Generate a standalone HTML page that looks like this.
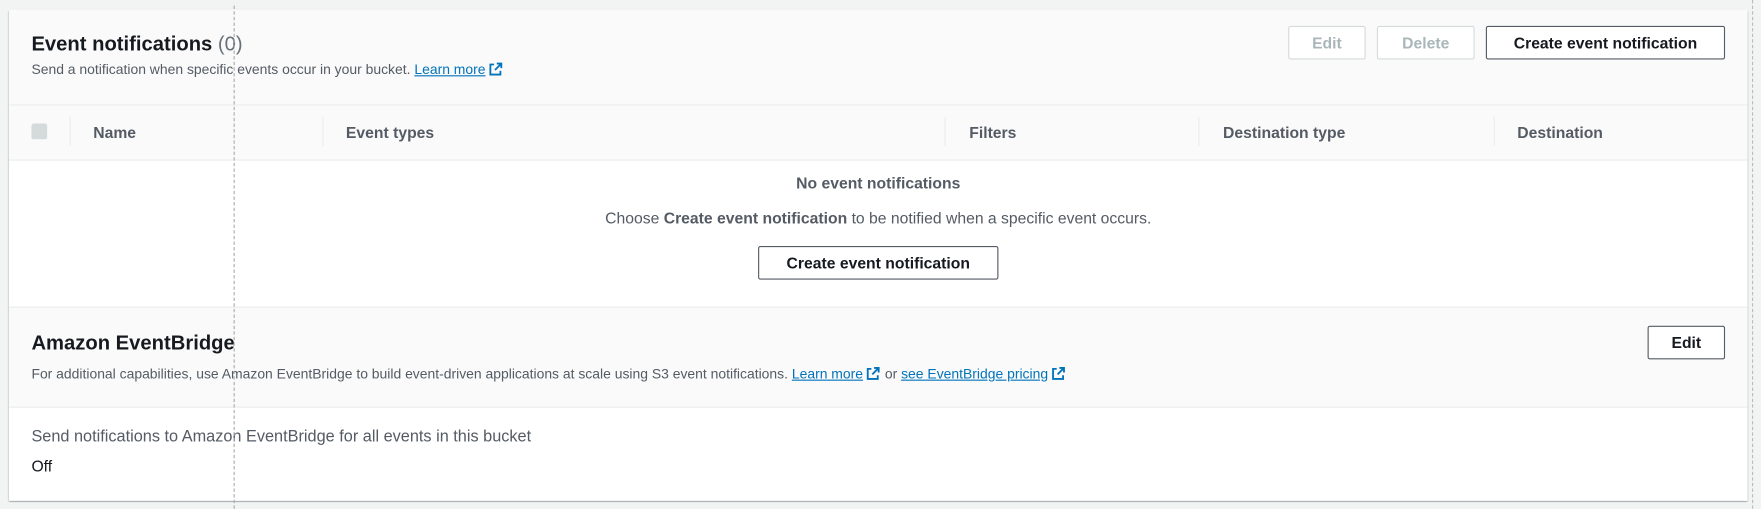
<!DOCTYPE html>
<html><head><style>
*{box-sizing:border-box;margin:0;padding:0}
html,body{width:1761px;height:509px;overflow:hidden;background:#f2f3f3}
#w{position:absolute;left:0;top:0;width:1568px;height:453px;transform:scale(1.12309);transform-origin:0 0;font-family:"Liberation Sans",sans-serif;color:#16191f}
.abs{position:absolute;white-space:nowrap}
.card{position:absolute;left:8px;top:9px;width:1548px;height:437px;background:#fff;box-shadow:0 1px 1px rgba(0,28,36,.3),1px 1px 1px rgba(0,28,36,.15),-1px 1px 1px rgba(0,28,36,.15)}
.btn{position:absolute;height:30px;border:1px solid #545b64;border-radius:2px;background:#fff;font-weight:bold;font-size:14px;color:#545b64;text-align:center;line-height:28px}
.dis{border-color:#d5dbdb;color:#aab7b8}
a{color:#0073bb;text-decoration:underline}
.th{position:absolute;top:101px;font-size:14px;font-weight:bold;color:#545b64}
.sep{position:absolute;top:95px;width:1px;height:26px;background:#eaeded}
.ext{display:inline-block;width:13px;height:13px;vertical-align:-2px;margin-left:3px}
</style></head><body><div id="w">
<div class="card">
 <div class="abs" style="left:0;top:0;width:1548px;height:85px;background:#fafafa;border-bottom:1px solid #eaeded"></div>
 <div class="abs" style="left:0;top:85px;width:1548px;height:49px;background:#fafafa;border-bottom:1px solid #eaeded"></div>
 <div class="abs" style="left:20px;top:20px;font-size:18px;font-weight:bold">Event notifications <span style="font-weight:normal;color:#687078">(0)</span></div>
 <div class="abs" style="left:20px;top:46px;font-size:12.4px;color:#545b64">Send a notification when specific events occur in your bucket. <a>Learn more</a><svg class="ext" viewBox="0 0 16 16"><path d="M9 2h5v5M14 2L7 9M6 3H2v11h11v-4" fill="none" stroke="#0073bb" stroke-width="2"/></svg></div>
 <div class="btn dis" style="left:1139px;top:14px;width:69px">Edit</div>
 <div class="btn dis" style="left:1218px;top:14px;width:87px">Delete</div>
 <div class="btn" style="left:1315px;top:14px;width:213px;color:#16191f">Create event notification</div>
 <div class="abs" style="left:20px;top:101px;width:14px;height:14px;background:#d5dbdb;border-radius:2px"></div>
 <div class="sep" style="left:54px"></div><div class="sep" style="left:279px"></div><div class="sep" style="left:833px"></div><div class="sep" style="left:1059px"></div><div class="sep" style="left:1322px"></div>
 <div class="th" style="left:75px">Name</div>
 <div class="th" style="left:300px">Event types</div>
 <div class="th" style="left:855px">Filters</div>
 <div class="th" style="left:1081px">Destination type</div>
 <div class="th" style="left:1343px">Destination</div>
 <div class="abs" style="left:0;width:1548px;top:146px;text-align:center;font-size:14px;font-weight:bold;color:#545b64">No event notifications</div>
 <div class="abs" style="left:0;width:1548px;top:177px;text-align:center;font-size:14px;color:#545b64">Choose <b>Create event notification</b> to be notified when a specific event occurs.</div>
 <div class="btn" style="left:667px;top:210px;width:214px;color:#16191f">Create event notification</div>
 <div class="abs" style="left:0;top:264px;width:1548px;height:90px;background:#fafafa;border-top:1px solid #eaeded;border-bottom:1px solid #eaeded"></div>
 <div class="abs" style="left:20px;top:286px;font-size:18px;font-weight:bold">Amazon EventBridge</div>
 <div class="abs" style="left:20px;top:317px;font-size:12.4px;color:#545b64">For additional capabilities, use Amazon EventBridge to build event-driven applications at scale using S3 event notifications. <a>Learn more</a><svg class="ext" viewBox="0 0 16 16"><path d="M9 2h5v5M14 2L7 9M6 3H2v11h11v-4" fill="none" stroke="#0073bb" stroke-width="2"/></svg> or <a>see EventBridge pricing</a><svg class="ext" viewBox="0 0 16 16"><path d="M9 2h5v5M14 2L7 9M6 3H2v11h11v-4" fill="none" stroke="#0073bb" stroke-width="2"/></svg></div>
 <div class="btn" style="left:1459px;top:281px;width:69px;color:#16191f">Edit</div>
 <div class="abs" style="left:20px;top:372px;font-size:14.5px;color:#545b64">Send notifications to Amazon EventBridge for all events in this bucket</div>
 <div class="abs" style="left:20px;top:398px;font-size:14px">Off</div>
</div>
<div class="abs" style="left:208px;top:5px;height:448px;border-left:1px dashed #aaa"></div>
<div class="abs" style="left:1560px;top:0;height:453px;border-left:1px dashed #bbb"></div>
</div></body></html>
